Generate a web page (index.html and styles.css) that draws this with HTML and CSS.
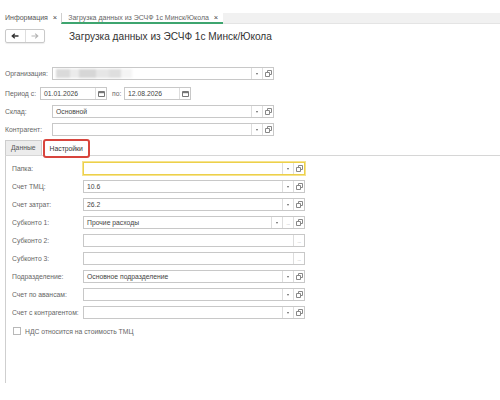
FILE: index.html
```html
<!DOCTYPE html>
<html lang="ru">
<head>
<meta charset="utf-8">
<title>Загрузка данных из ЭСЧФ 1с Минск/Юкола</title>
<link rel="stylesheet" href="styles.css">
</head>
<body>
<div class="window-tabs">
  <div class="wtab">Информация <span class="x">×</span></div>
  <div class="wtab active">Загрузка данных из ЭСЧФ 1с Минск/Юкола <span class="x">×</span></div>
  <div class="wtab-fill"></div>
</div>

<div class="header">
  <div class="nav">
    <span class="nav-btn">
      <svg width="8" height="6" viewBox="0 0 8 6"><path d="M7.5 3H1.5M3.8 0.7L1.2 3l2.6 2.3" fill="none" stroke="#333" stroke-width="1.3"/></svg>
    </span>
    <span class="nav-btn">
      <svg width="8" height="6" viewBox="0 0 8 6"><path d="M0.5 3H6.5M4.2 0.7L6.8 3 4.2 5.3" fill="none" stroke="#b5b5b5" stroke-width="1.1"/></svg>
    </span>
  </div>
  <h1 class="title">Загрузка данных из ЭСЧФ 1с Минск/Юкола</h1>
</div>

<div class="top-form">
  <div class="row first">
    <span class="lbl wl">Организация:</span>
    <div class="field">
      <div class="input"><span class="masked"></span></div>
      <span class="btn"><i class="drop"></i></span>
      <span class="btn"><svg class="open" width="7" height="7" viewBox="0 0 7 7"><path d="M2.5 0.5h4v4h-4z" fill="#fff" stroke="#888"/><path d="M0.5 2.5h4v4h-4z" fill="#fff" stroke="#888"/></svg></span>
    </div>
  </div>
  <div class="row">
    <span class="lbl wp">Период с:</span>
    <div class="field date">
      <div class="input">01.01.2026</div>
      <span class="btn"><svg width="7" height="6" viewBox="0 0 7 6"><path d="M0.5 0.5h6v5h-6z" fill="#fff" stroke="#777"/><path d="M0.5 1h6v1.2h-6z" fill="#777"/></svg></span>
    </div>
    <span class="lbl wpo">по:</span>
    <div class="field date">
      <div class="input">12.08.2026</div>
      <span class="btn"><svg width="7" height="6" viewBox="0 0 7 6"><path d="M0.5 0.5h6v5h-6z" fill="#fff" stroke="#777"/><path d="M0.5 1h6v1.2h-6z" fill="#777"/></svg></span>
    </div>
  </div>
  <div class="row">
    <span class="lbl wl">Склад:</span>
    <div class="field">
      <div class="input">Основной</div>
      <span class="btn"><i class="drop"></i></span>
      <span class="btn"><svg class="open" width="7" height="7" viewBox="0 0 7 7"><path d="M2.5 0.5h4v4h-4z" fill="#fff" stroke="#888"/><path d="M0.5 2.5h4v4h-4z" fill="#fff" stroke="#888"/></svg></span>
    </div>
  </div>
  <div class="row">
    <span class="lbl wl">Контрагент:</span>
    <div class="field">
      <div class="input"></div>
      <span class="btn"><i class="drop"></i></span>
      <span class="btn"><svg class="open" width="7" height="7" viewBox="0 0 7 7"><path d="M2.5 0.5h4v4h-4z" fill="#fff" stroke="#888"/><path d="M0.5 2.5h4v4h-4z" fill="#fff" stroke="#888"/></svg></span>
    </div>
  </div>
</div>

<div class="tabs">
  <span class="tab">Данные</span>
  <span class="tab active">Настройки</span>
</div>

<div class="panel">
  <div class="row">
    <span class="lbl wf">Папка:</span>
    <div class="field focused">
      <div class="input"></div>
      <span class="btn"><i class="drop"></i></span>
      <span class="btn"><svg class="open" width="7" height="7" viewBox="0 0 7 7"><path d="M2.5 0.5h4v4h-4z" fill="#fff" stroke="#888"/><path d="M0.5 2.5h4v4h-4z" fill="#fff" stroke="#888"/></svg></span>
    </div>
  </div>
  <div class="row">
    <span class="lbl wf">Счет ТМЦ:</span>
    <div class="field">
      <div class="input">10.6</div>
      <span class="btn"><i class="drop"></i></span>
      <span class="btn"><svg class="open" width="7" height="7" viewBox="0 0 7 7"><path d="M2.5 0.5h4v4h-4z" fill="#fff" stroke="#888"/><path d="M0.5 2.5h4v4h-4z" fill="#fff" stroke="#888"/></svg></span>
    </div>
  </div>
  <div class="row">
    <span class="lbl wf">Счет затрат:</span>
    <div class="field">
      <div class="input">26.2</div>
      <span class="btn"><i class="drop"></i></span>
      <span class="btn"><svg class="open" width="7" height="7" viewBox="0 0 7 7"><path d="M2.5 0.5h4v4h-4z" fill="#fff" stroke="#888"/><path d="M0.5 2.5h4v4h-4z" fill="#fff" stroke="#888"/></svg></span>
    </div>
  </div>
  <div class="row">
    <span class="lbl wf">Субконто 1:</span>
    <div class="field">
      <div class="input">Прочие расходы</div>
      <span class="btn"><i class="drop"></i></span>
      <span class="btn dots">...</span>
      <span class="btn"><svg class="open" width="7" height="7" viewBox="0 0 7 7"><path d="M2.5 0.5h4v4h-4z" fill="#fff" stroke="#888"/><path d="M0.5 2.5h4v4h-4z" fill="#fff" stroke="#888"/></svg></span>
    </div>
  </div>
  <div class="row">
    <span class="lbl wf">Субконто 2:</span>
    <div class="field">
      <div class="input"></div>
      <span class="btn dots">...</span>
    </div>
  </div>
  <div class="row">
    <span class="lbl wf">Субконто 3:</span>
    <div class="field">
      <div class="input"></div>
      <span class="btn dots">...</span>
    </div>
  </div>
  <div class="row">
    <span class="lbl wf">Подразделение:</span>
    <div class="field">
      <div class="input">Основное подразделение</div>
      <span class="btn"><i class="drop"></i></span>
      <span class="btn"><svg class="open" width="7" height="7" viewBox="0 0 7 7"><path d="M2.5 0.5h4v4h-4z" fill="#fff" stroke="#888"/><path d="M0.5 2.5h4v4h-4z" fill="#fff" stroke="#888"/></svg></span>
    </div>
  </div>
  <div class="row">
    <span class="lbl wf">Счет по авансам:</span>
    <div class="field">
      <div class="input"></div>
      <span class="btn"><i class="drop"></i></span>
      <span class="btn"><svg class="open" width="7" height="7" viewBox="0 0 7 7"><path d="M2.5 0.5h4v4h-4z" fill="#fff" stroke="#888"/><path d="M0.5 2.5h4v4h-4z" fill="#fff" stroke="#888"/></svg></span>
    </div>
  </div>
  <div class="row">
    <span class="lbl wf">Счет с контрагентом:</span>
    <div class="field">
      <div class="input"></div>
      <span class="btn"><i class="drop"></i></span>
      <span class="btn"><svg class="open" width="7" height="7" viewBox="0 0 7 7"><path d="M2.5 0.5h4v4h-4z" fill="#fff" stroke="#888"/><path d="M0.5 2.5h4v4h-4z" fill="#fff" stroke="#888"/></svg></span>
    </div>
  </div>
  <label class="check-row">
    <span class="checkbox"></span>
    <span class="check-text">НДС относится на стоимость ТМЦ</span>
  </label>
</div>
</body>
</html>
```

FILE: styles.css
```css
* { box-sizing: border-box; }

html, body {
  margin: 0;
  padding: 0;
  background: #fff;
}

body {
  width: 500px;
  height: 400px;
  overflow: hidden;
  font-family: "Liberation Sans", Arial, sans-serif;
  font-size: 6.8px;
  color: #555;
}

/* window tabs strip */
.window-tabs {
  display: flex;
  margin-top: 13px;
  height: 11px;
  line-height: 10px;
  font-size: 7px;
}

.wtab {
  padding: 0 4px 0 5px;
  white-space: nowrap;
  color: #555;
}

.wtab .x {
  margin-left: 3px;
  font-size: 7.5px;
  color: #444;
}

.wtab.active {
  padding: 0 5px 0 6px;
  border-left: 1px solid #cfcfcf;
  border-bottom: 2px solid #3ea56f;
  color: #666;
}

.wtab-fill {
  flex: 1;
  background: #f1f1f1;
  border-bottom: 1px solid #e4e4e4;
}

/* form header */
.header {
  display: flex;
  align-items: center;
  height: 14px;
  margin-top: 5px;
  padding-left: 5px;
}

.nav {
  display: flex;
  width: 40px;
  height: 14px;
  border: 1px solid #c9c9c9;
  border-radius: 2px;
  box-shadow: 0 1px 1px rgba(0, 0, 0, 0.08);
}

.nav-btn {
  flex: 1;
  display: flex;
  align-items: center;
  justify-content: center;
}

.nav-btn + .nav-btn {
  border-left: 1px solid #dedede;
}

.title {
  margin: 0 0 0 24px;
  font-size: 10.1px;
  font-weight: normal;
  color: #333;
  white-space: nowrap;
}

/* rows and input fields */
.row {
  display: flex;
  align-items: center;
  height: 13px;
}

.lbl {
  flex: none;
  white-space: nowrap;
  color: #666;
}

.wl { width: 47px; }
.wp { width: 35px; }
.wpo { width: 12px; margin-left: 5px; }
.wf { width: 71px; }

.field {
  flex: none;
  display: flex;
  width: 222px;
  height: 13px;
  border: 1px solid #c8c8c8;
  background: #fff;
}

.field.date { width: 67px; }

.field.focused {
  border-color: #ecd04a;
  box-shadow: 0 0 0 1px #f6e38e;
}

.input {
  flex: 1;
  min-width: 0;
  padding-left: 3px;
  line-height: 11px;
  color: #444;
  white-space: nowrap;
  overflow: hidden;
}

.btn {
  flex: none;
  width: 11px;
  display: flex;
  align-items: center;
  justify-content: center;
  border-left: 1px solid #dddddd;
}

.drop {
  width: 0;
  height: 0;
  border-left: 1.5px solid transparent;
  border-right: 1.5px solid transparent;
  border-top: 2px solid #666;
}

.dots {
  color: #b8b8b8;
  font-size: 6px;
  line-height: 6px;
  letter-spacing: -0.5px;
}

/* hidden organisation name */
.masked {
  display: inline-block;
  width: 76px;
  height: 9px;
  margin-top: 1px;
  background: linear-gradient(90deg, #dadada 0 18%, #ebebeb 18% 30%, #d6d6d6 30% 52%, #e6e6e6 52% 70%, #dedede 70% 86%, #f4f4f4 86%);
  filter: blur(1px);
}

.top-form {
  display: flex;
  flex-direction: column;
  gap: 5px;
  margin-top: 24px;
  padding-left: 5px;
}

.top-form .first { margin-bottom: 2px; }

/* page tabs */
.tabs {
  display: flex;
  align-items: flex-end;
  height: 16px;
  margin-top: 3px;
  padding-left: 5px;
}

.tab {
  height: 15px;
  padding: 0 5px;
  line-height: 14px;
  border: 1px solid #cdcdcd;
  border-bottom: none;
  background: #ececec;
  color: #555;
}

.tab.active {
  position: relative;
  z-index: 1;
  height: 19px;
  margin-bottom: -3px;
  margin-left: 1px;
  padding: 0 5px;
  line-height: 15px;
  border: 2px solid #d8453d;
  border-radius: 3px;
  background: #fff;
  color: #333;
}

.panel {
  display: flex;
  flex-direction: column;
  gap: 5px;
  height: 228px;
  margin-left: 5px;
  padding: 6px 0 0 6px;
  border-top: 1px solid #d6d6d6;
  border-left: 1px solid #cfcfcf;
}

.check-row {
  display: flex;
  align-items: center;
  gap: 4px;
  height: 8px;
  margin-top: 3px;
  padding-left: 1px;
}

.checkbox {
  width: 8px;
  height: 8px;
  border: 1px solid #b8b8b8;
  background: #fff;
}

.check-text {
  color: #666;
}
```
